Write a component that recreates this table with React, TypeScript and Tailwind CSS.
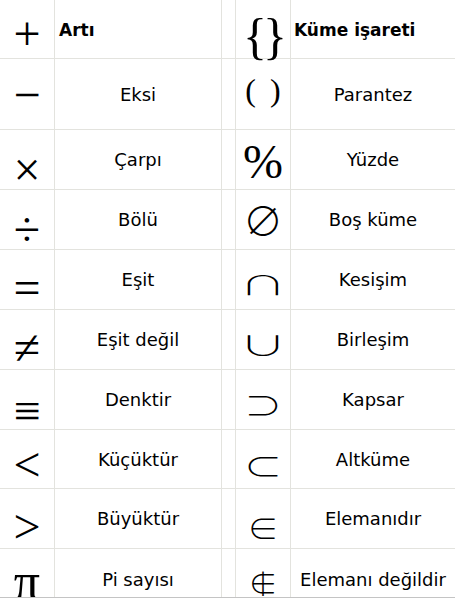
import React from "react";

type Row = {
  h: string;
  s1: string;
  c1: string;
  l1: string;
  s2: string;
  c2: string;
  l2: string;
  bold?: boolean;
  last?: boolean;
};

const serif = "font-['Liberation_Serif','DejaVu_Serif',serif]";
const cjk = "font-['Noto_Sans_CJK_JP','Noto_Sans_CJK_SC',sans-serif] font-light";

const rows: Row[] = [
  { h: "h-[59px]", s1: "+", c1: `${serif} text-[48px] pt-[10px]`, l1: "Artı", s2: "{}", c2: `${serif} text-[50px] pt-[13px] tracking-[-4px]`, l2: "Küme işareti", bold: true },
  { h: "h-[71px]", s1: "−", c1: `${serif} text-[48px] pt-[1px]`, l1: "Eksi", s2: "( )", c2: `${serif} text-[32px] pb-[8px] pl-[3px] tracking-[3px]`, l2: "Parantez" },
  { h: "h-[60px]", s1: "×", c1: `${serif} text-[48px] pt-[21px]`, l1: "Çarpı", s2: "%", c2: `${serif} text-[48px] pt-[5px]`, l2: "Yüzde" },
  { h: "h-[60px]", s1: "÷", c1: `${serif} text-[48px] pt-[20px]`, l1: "Bölü", s2: "∅", c2: `${cjk} text-[40px] pb-[2px]`, l2: "Boş küme" },
  { h: "h-[60px]", s1: "=", c1: `${serif} text-[48px] pt-[17px]`, l1: "Eşit", s2: "∩", c2: `${cjk} text-[26px] pt-[9px] scale-x-[1.8]`, l2: "Kesişim" },
  { h: "h-[60px]", s1: "≠", c1: `${serif} text-[48px] pt-[16px]`, l1: "Eşit değil", s2: "∪", c2: `${cjk} text-[27px] pt-[10px] scale-x-[1.74]`, l2: "Birleşim" },
  { h: "h-[60px]", s1: "≡", c1: `${serif} text-[48px] pt-[23px]`, l1: "Denktir", s2: "⊃", c2: `${cjk} text-[29px] pt-[9px] scale-x-[1.3]`, l2: "Kapsar" },
  { h: "h-[59px]", s1: "<", c1: `${serif} text-[48px] pt-[11px]`, l1: "Küçüktür", s2: "⊂", c2: `${cjk} text-[29px] pt-[12px] scale-x-[1.33]`, l2: "Altküme" },
  { h: "h-[60px]", s1: ">", c1: `${serif} text-[48px] pt-[17px]`, l1: "Büyüktür", s2: "∈", c2: `${cjk} text-[31px] pt-[16px]`, l2: "Elemanıdır" },
  { h: "h-[60px]", s1: "π", c1: `${serif} text-[52px] pt-[5px]`, l1: "Pi sayısı", s2: "∉", c2: `${cjk} text-[29px] pt-[7px]`, l2: "Elemanı değildir", last: true },
];

function Label({ text, bold, first }: { text: string; bold?: boolean; first?: boolean }) {
  if (bold) {
    return (
      <div className={`flex h-full items-center ${first ? "pl-[4px]" : "pl-[3px]"} pt-[4px] text-[17px] font-bold`}>
        {text}
      </div>
    );
  }
  return <div className="flex h-full items-center justify-center text-[18px]">{text}</div>;
}

export default function App() {
  return (
    <div className="flex h-[598px] w-[455px] flex-col bg-white text-black font-['DejaVu_Sans',sans-serif]">
      <div className="h-[597px] overflow-hidden">
        {rows.map((r, i) => (
          <div
            key={i}
            className={`grid grid-cols-[55px_167px_14px_55px_164px] grid-rows-[minmax(0,1fr)] ${r.h} ${r.last ? "" : "border-b"} border-[#e3e3de]`}
          >
            <div className="min-h-0 border-r border-[#e3e3de]">
              <div className={`flex h-full items-center justify-center leading-none ${r.c1}`}>{r.s1}</div>
            </div>
            <div className="min-h-0 border-r border-[#e3e3de]">
              <Label text={r.l1} bold={r.bold} first />
            </div>
            <div className="min-h-0 border-r border-[#e3e3de]" />
            <div className="min-h-0 border-r border-[#e3e3de]">
              <div className={`flex h-full items-center justify-center leading-none ${r.c2}`}>{r.s2}</div>
            </div>
            <div className="min-h-0">
              <Label text={r.l2} bold={r.bold} />
            </div>
          </div>
        ))}
      </div>
      <div className="h-px bg-[#c4c4c4]" />
    </div>
  );
}
